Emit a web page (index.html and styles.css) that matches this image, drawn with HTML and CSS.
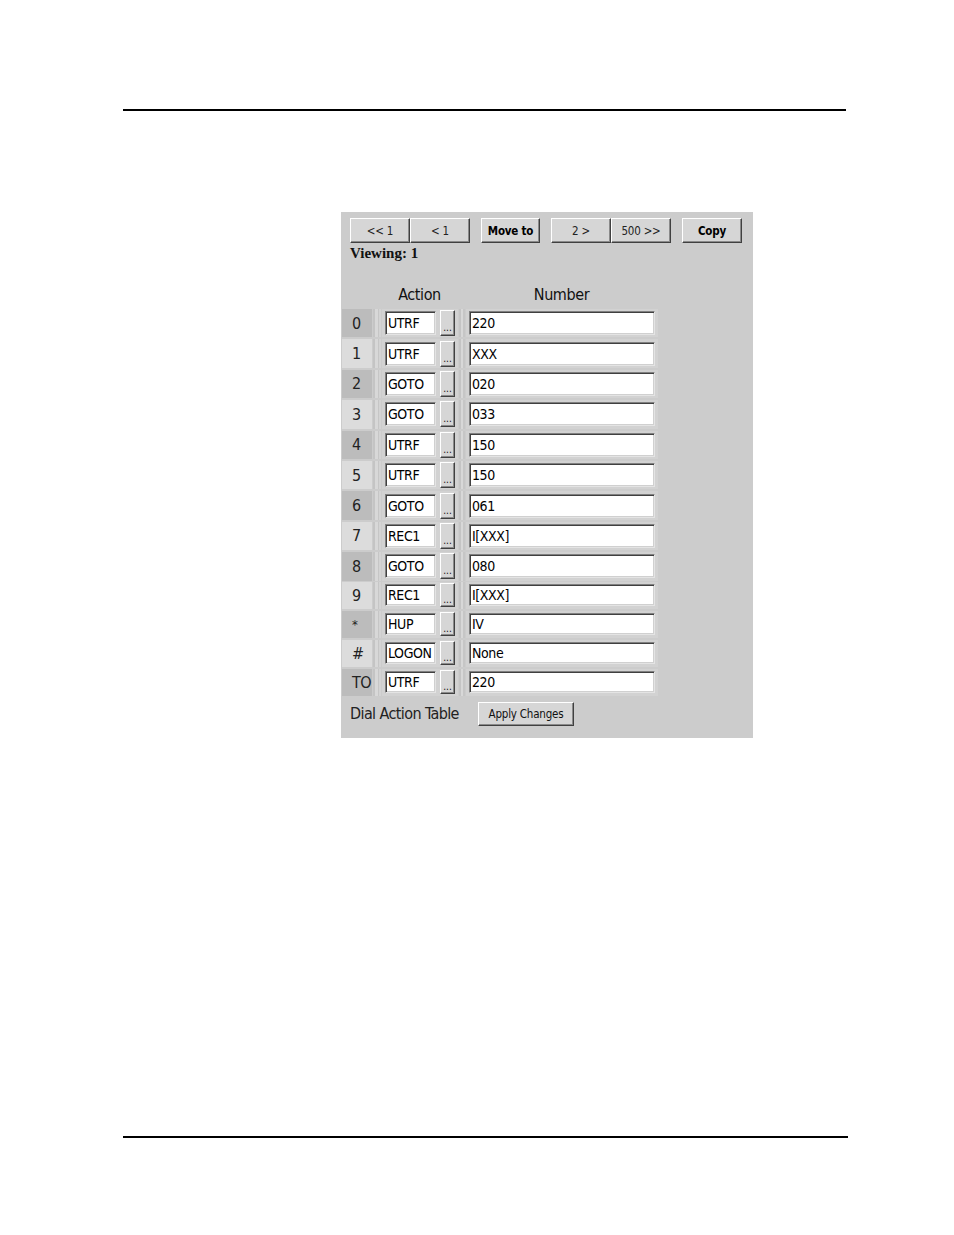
FILE: index.html
```html
<!DOCTYPE html>
<html>
<head>
<meta charset="utf-8">
<link rel="stylesheet" href="styles.css">
</head>
<body>
<div class="page">
  <div class="rule rule-top"></div>
  <div class="panel">
    <div class="nav">
      <div class="group">
        <button class="btn nav-btn">&lt;&lt; 1</button><button class="btn nav-btn">&lt; 1</button>
      </div>
      <button class="btn nav-btn bold narrow">Move to</button>
      <div class="group">
        <button class="btn nav-btn">2 &gt;</button><button class="btn nav-btn">500 &gt;&gt;</button>
      </div>
      <button class="btn nav-btn bold">Copy</button>
    </div>
    <div class="viewing">Viewing: 1</div>
    <div class="head">
      <div class="c-label"></div>
      <div class="c-sp"></div>
      <div class="c-action h h-action">Action</div>
      <div class="c-sp2"></div>
      <div class="c-num h h-num">Number</div>
    </div>
    <div class="rows">
      <div class="row even"><div class="c-label">0</div><div class="c-sp"></div><div class="c-action"><div class="inp act">UTRF</div><button class="btn dots">...</button></div><div class="c-sp2"></div><div class="c-num"><div class="inp num">220</div></div></div>
      <div class="row odd"><div class="c-label">1</div><div class="c-sp"></div><div class="c-action"><div class="inp act">UTRF</div><button class="btn dots">...</button></div><div class="c-sp2"></div><div class="c-num"><div class="inp num">XXX</div></div></div>
      <div class="row even"><div class="c-label">2</div><div class="c-sp"></div><div class="c-action"><div class="inp act">GOTO</div><button class="btn dots">...</button></div><div class="c-sp2"></div><div class="c-num"><div class="inp num">020</div></div></div>
      <div class="row odd"><div class="c-label">3</div><div class="c-sp"></div><div class="c-action"><div class="inp act">GOTO</div><button class="btn dots">...</button></div><div class="c-sp2"></div><div class="c-num"><div class="inp num">033</div></div></div>
      <div class="row even"><div class="c-label">4</div><div class="c-sp"></div><div class="c-action"><div class="inp act">UTRF</div><button class="btn dots">...</button></div><div class="c-sp2"></div><div class="c-num"><div class="inp num">150</div></div></div>
      <div class="row odd"><div class="c-label">5</div><div class="c-sp"></div><div class="c-action"><div class="inp act">UTRF</div><button class="btn dots">...</button></div><div class="c-sp2"></div><div class="c-num"><div class="inp num">150</div></div></div>
      <div class="row even"><div class="c-label">6</div><div class="c-sp"></div><div class="c-action"><div class="inp act">GOTO</div><button class="btn dots">...</button></div><div class="c-sp2"></div><div class="c-num"><div class="inp num">061</div></div></div>
      <div class="row odd"><div class="c-label">7</div><div class="c-sp"></div><div class="c-action"><div class="inp act">REC1</div><button class="btn dots">...</button></div><div class="c-sp2"></div><div class="c-num"><div class="inp num">I[XXX]</div></div></div>
      <div class="row even tight"><div class="c-label">8</div><div class="c-sp"></div><div class="c-action"><div class="inp act">GOTO</div><button class="btn dots">...</button></div><div class="c-sp2"></div><div class="c-num"><div class="inp num">080</div></div></div>
      <div class="row odd short"><div class="c-label">9</div><div class="c-sp"></div><div class="c-action"><div class="inp act">REC1</div><button class="btn dots">...</button></div><div class="c-sp2"></div><div class="c-num"><div class="inp num">I[XXX]</div></div></div>
      <div class="row even short"><div class="c-label star">*</div><div class="c-sp"></div><div class="c-action"><div class="inp act">HUP</div><button class="btn dots">...</button></div><div class="c-sp2"></div><div class="c-num"><div class="inp num">IV</div></div></div>
      <div class="row odd short"><div class="c-label">#</div><div class="c-sp"></div><div class="c-action"><div class="inp act">LOGON</div><button class="btn dots">...</button></div><div class="c-sp2"></div><div class="c-num"><div class="inp num">None</div></div></div>
      <div class="row even short"><div class="c-label">TO</div><div class="c-sp"></div><div class="c-action"><div class="inp act">UTRF</div><button class="btn dots">...</button></div><div class="c-sp2"></div><div class="c-num"><div class="inp num">220</div></div></div>
    </div>
    <div class="foot">
      <span class="foot-title">Dial Action Table</span>
      <button class="btn apply">Apply Changes</button>
    </div>
  </div>
  <div class="rule rule-bottom"></div>
</div>
</body>
</html>
```
FILE: styles.css
```css
html, body {
  margin: 0;
  padding: 0;
  background: #ffffff;
}
.page {
  width: 954px;
  height: 1235px;
  overflow: hidden;
}
.rule {
  background: #000;
  height: 2px;
  margin-left: 123px;
}
.rule-top {
  width: 723px;
  margin-top: 109px;
}
.rule-bottom {
  width: 725px;
  margin-top: 398px;
}
.panel {
  margin-left: 341px;
  margin-top: 101px;
  width: 412px;
  height: 526px;
  background: #cccccc;
  box-sizing: border-box;
  padding: 6px 0 0 1px;
  font-family: "DejaVu Sans Condensed", "DejaVu Sans", sans-serif;
  font-stretch: condensed;
  color: #111;
}
.btn {
  font-family: inherit;
  font-stretch: condensed;
  background: #d6d6d6;
  border: 1px solid;
  border-color: #ffffff #404040 #404040 #ffffff;
  box-shadow: inset -1px -1px 0 #8a8a8a;
  padding: 0;
  margin: 0;
  color: #111;
  box-sizing: border-box;
  cursor: default;
}
.nav {
  display: flex;
  gap: 11px;
  margin-left: 8px;
  height: 25px;
}
.group {
  display: flex;
}
.nav-btn {
  width: 60px;
  height: 25px;
  font-size: 11.5px;
  letter-spacing: -0.2px;
  color: #222;
}
.nav-btn.narrow {
  width: 59px;
}
.bold {
  font-weight: bold;
  color: #000;
}
.viewing {
  margin-left: 8px;
  margin-top: 2px;
  height: 17px;
  line-height: 17px;
  font-family: "Liberation Serif", "DejaVu Serif", serif;
  font-weight: bold;
  font-size: 15px;
  font-stretch: normal;
  color: #111;
}
.head {
  display: flex;
  margin-top: 24px;
  height: 18px;
  margin-bottom: 5px;
}
.h {
  font-size: 16px;
  letter-spacing: -0.4px;
  line-height: 18px;
  text-align: center;
  justify-content: center;
}
.head .c-label, .head .c-sp, .head .c-sp2, .head .c-action, .head .c-num {
  background: transparent;
  padding: 0;
}
.head .h-action {
  padding-left: 3px;
}
.head .h-num {
  padding-left: 7px;
}
.rows {
  display: flex;
  flex-direction: column;
}
.row {
  display: flex;
  height: 28.4px;
  margin-bottom: 2px;
  gap: 1px;
}
.row.tight {
  margin-bottom: 1px;
}
.row.short {
  height: 27px;
}
.c-label {
  width: 30px;
  box-sizing: border-box;
  padding-left: 10px;
  font-size: 16px;
  letter-spacing: -0.5px;
  display: flex;
  align-items: center;
  color: #222;
}
.c-label.star {
  font-size: 13px;
  align-items: flex-start;
  padding-top: 6px;
}
.even .c-label {
  background: #bcbcbc;
}
.odd .c-label {
  background: #dcdcdc;
}
.c-sp {
  width: 8px;
  background: linear-gradient(90deg, #c4c4c4 0 2px, #d8d8d8 2px 5px, #c6c6c6 5px 6px, #d4d4d4 6px);
}
.c-sp2 {
  width: 6px;
  background: linear-gradient(90deg, #c4c4c4 0 2px, #d8d8d8 2px 4px, #c6c6c6 4px);
}
.c-action {
  width: 76px;
  display: flex;
  align-items: center;
  box-sizing: border-box;
  padding-left: 3px;
  gap: 4px;
  background: #d2d2d2;
}
.c-num {
  width: 192px;
  display: flex;
  align-items: center;
  box-sizing: border-box;
  padding-left: 3px;
  background: #d2d2d2;
}
.inp {
  background: #fff;
  box-sizing: border-box;
  height: 24px;
  border: 1px solid;
  border-color: #808080 #e4e4e4 #e4e4e4 #808080;
  box-shadow: inset 1px 1px 0 #404040, inset -1px -1px 0 #d0d0d0;
  font-size: 14px;
  letter-spacing: -0.4px;
  line-height: 22px;
  padding-left: 2px;
  color: #000;
  white-space: nowrap;
  overflow: hidden;
}
.short .inp {
  height: 22px;
  line-height: 20px;
}
.act {
  width: 51px;
}
.num {
  width: 186px;
}
.dots {
  width: 15px;
  height: 26px;
  font-size: 10px;
  line-height: 10px;
  padding-top: 10px;
}
.short .dots {
  height: 24px;
}
.foot {
  display: flex;
  align-items: center;
  margin-top: 4px;
  margin-left: 8px;
  height: 24px;
}
.foot-title {
  font-size: 16px;
  letter-spacing: -0.6px;
  width: 128px;
  color: #222;
}
.apply {
  width: 96px;
  height: 24px;
  font-size: 11.5px;
  letter-spacing: -0.2px;
}
```
